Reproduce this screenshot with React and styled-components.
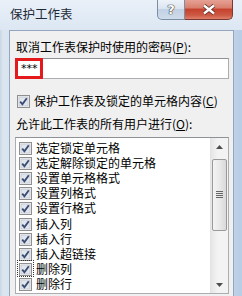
import React from 'react';
import styled, { createGlobalStyle } from 'styled-components';

const Global = createGlobalStyle`
  html, body { margin: 0; padding: 0; }
  body {
    width: 242px;
    height: 296px;
    overflow: hidden;
    font-family: "Noto Sans CJK SC", "Noto Sans", sans-serif;
    font-size: 12px;
    color: #000;
  }
`;

const Window = styled.div`
  width: 242px;
  height: 296px;
  display: flex;
  flex-direction: column;
  background: linear-gradient(90deg, #c9d6e4 0px, #dbe5f0 3px, #d6e2ef 200px, #b7cde6 100%);
  overflow: hidden;
`;

const TitleBar = styled.div`
  height: 30px;
  flex: none;
  display: flex;
  align-items: flex-start;
  background: linear-gradient(180deg, #e9f0f8 0%, #dce7f3 100%);
`;

const Title = styled.div`
  flex: 1;
  padding: 5px 0 0 10px;
  font-size: 12.5px;
  line-height: 18px;
  color: #1e2a38;
`;

const Buttons = styled.div`
  display: flex;
  margin-right: 9px;
`;

const CaptionButton = styled.div`
  height: 19px;
  width: ${(p) => p.w}px;
  display: flex;
  align-items: center;
  justify-content: center;
  border: 1px solid ${(p) => (p.close ? '#7a3a32' : '#7b8ea4')};
  border-top: none;
  border-radius: ${(p) => (p.close ? '0 0 5px 0' : '0 0 0 5px')};
  border-left: ${(p) => (p.close ? 'none' : undefined)};
  background: ${(p) =>
    p.close
      ? 'linear-gradient(180deg, #e6a195 0%, #d9806f 40%, #c7432f 50%, #cc5a44 80%, #e0806b 100%)'
      : 'linear-gradient(180deg, #eef3f9 0%, #dbe5f0 45%, #c2d2e4 50%, #cfdcea 100%)'};
  color: #fff;
  font-family: "DejaVu Sans", sans-serif;
  font-weight: bold;
  font-size: 13px;
  text-shadow: 0 0 1px #333, 0 0 1px #333, 0 0 1px #333;
`;

const Panel = styled.div`
  flex: 1;
  margin: 0 8px 0 9px;
  background: #f0f0f0;
  border: 1px solid #93a6bd;
  border-bottom: none;
  padding: 8px 4px 0 5px;
  display: flex;
  flex-direction: column;
`;

const Label = styled.div`
  line-height: 16px;
  margin: ${(p) => p.m || '0'};
  padding-left: 1px;
  white-space: nowrap;
  u { text-decoration: underline; }
`;

const PasswordBox = styled.div`
  position: relative;
  height: 19px;
  margin: 3px 0 0 0;
  background: #fff;
  border: 1px solid #abadb3;
  border-top-color: #8e9196;
  display: flex;
  align-items: center;
  padding-left: 5px;
  font-family: "DejaVu Sans", sans-serif;
  font-size: 11px;
`;

const Caret = styled.span`
  display: inline-block;
  width: 1px;
  height: 13px;
  background: #000;
  margin-left: 2px;
`;

const Highlight = styled.div`
  position: absolute;
  left: -1px;
  top: -1px;
  bottom: -1px;
  width: 22px;
  border: 3px solid #e3191b;
`;

const CheckRow = styled.div`
  display: flex;
  align-items: center;
  gap: 4px;
  height: 16px;
  margin: ${(p) => p.m || '0'};
  padding-left: ${(p) => p.pl || 0}px;
  white-space: nowrap;
`;

const BoxWrap = styled.div`
  width: 13px;
  height: 13px;
  flex: none;
  outline: ${(p) => (p.focus ? '1px dotted #333' : 'none')};
  outline-offset: 1px;
`;

const List = styled.div`
  height: 155px;
  margin-top: 5px;
  background: #fff;
  border: 1px solid #abadb3;
  border-top-color: #8e9196;
  display: flex;
`;

const Items = styled.div`
  flex: 1;
  padding: 2px 0 0 3px;
  overflow: hidden;
`;

const Item = styled.div`
  height: 15.1px;
  display: flex;
  align-items: center;
  gap: 4px;
  white-space: nowrap;
`;

const ItemText = styled.div`
  height: 15px;
  line-height: 15px;
`;

const Scroll = styled.div`
  width: 17px;
  flex: none;
  background: linear-gradient(90deg, #e6e6e6, #f3f3f3 40%, #f3f3f3);
  border-left: 1px solid #e3e3e3;
  display: flex;
  flex-direction: column;
`;

const Arrow = styled.div`
  height: 17px;
  display: flex;
  align-items: center;
  justify-content: center;
`;

const Track = styled.div`
  flex: 1;
  display: flex;
  flex-direction: column;
`;

const Thumb = styled.div`
  height: 70px;
  margin: 4px 1px 0 1px;
  border: 1px solid #9a9a9a;
  border-radius: 2px;
  background: linear-gradient(90deg, #f4f4f4, #e9e9e9 50%, #d9d9d9);
  display: flex;
  align-items: center;
  justify-content: center;
`;

const CheckBox = ({ focus }) => (
  <BoxWrap focus={focus}>
    <svg width="13" height="13" viewBox="0 0 13 13">
      <rect x="0.5" y="0.5" width="12" height="12" fill="#f4f4f4" stroke="#8f8f8f" />
      <rect x="2" y="2" width="9" height="9" fill="#e1e6ee" stroke="#b4bcc8" strokeWidth="0.6" />
      <path d="M3.2 6.6 L5.4 9.2 L9.8 3.2" fill="none" stroke="#3c4d72" strokeWidth="1.9" />
    </svg>
  </BoxWrap>
);

const items = [
  '选定锁定单元格',
  '选定解除锁定的单元格',
  '设置单元格格式',
  '设置列格式',
  '设置行格式',
  '插入列',
  '插入行',
  '插入超链接',
  '删除列',
  '删除行',
];

const App = () => (
  <>
    <Global />
    <Window>
      <TitleBar>
        <Title>保护工作表</Title>
        <Buttons>
          <CaptionButton w={26}>?</CaptionButton>
          <CaptionButton w={47} close>
            <svg width="14" height="11" viewBox="0 0 14 11">
              <path d="M2 1.5 L12 9.5 M12 1.5 L2 9.5" stroke="#5a2a24" strokeWidth="4" />
              <path d="M2 1.5 L12 9.5 M12 1.5 L2 9.5" stroke="#fff" strokeWidth="2.4" />
            </svg>
          </CaptionButton>
        </Buttons>
      </TitleBar>
      <Panel>
        <Label>取消工作表保护时使用的密码(<u>P</u>):</Label>
        <PasswordBox>
          ***<Caret />
          <Highlight />
        </PasswordBox>
        <CheckRow m="13px 0 0 0" pl={2}>
          <CheckBox />
          <span>保护工作表及锁定的单元格内容(<u>C</u>)</span>
        </CheckRow>
        <Label m="8px 0 0 0">允许此工作表的所有用户进行(<u>O</u>):</Label>
        <List>
          <Items>
            {items.map((t, i) => (
              <Item key={t}>
                <CheckBox focus={i === 8} />
                <ItemText>{t}</ItemText>
              </Item>
            ))}
          </Items>
          <Scroll>
            <Arrow>
              <svg width="7" height="4" viewBox="0 0 7 4">
                <path d="M0 4 L3.5 0 L7 4 Z" fill="#4d4d4d" />
              </svg>
            </Arrow>
            <Track>
              <Thumb>
                <svg width="7" height="8" viewBox="0 0 7 8">
                  <path d="M0 0.5 H7 M0 2.5 H7 M0 4.5 H7 M0 6.5 H7" stroke="#666" />
                </svg>
              </Thumb>
            </Track>
            <Arrow>
              <svg width="7" height="4" viewBox="0 0 7 4">
                <path d="M0 0 L7 0 L3.5 4 Z" fill="#4d4d4d" />
              </svg>
            </Arrow>
          </Scroll>
        </List>
      </Panel>
    </Window>
  </>
);

export default App;
